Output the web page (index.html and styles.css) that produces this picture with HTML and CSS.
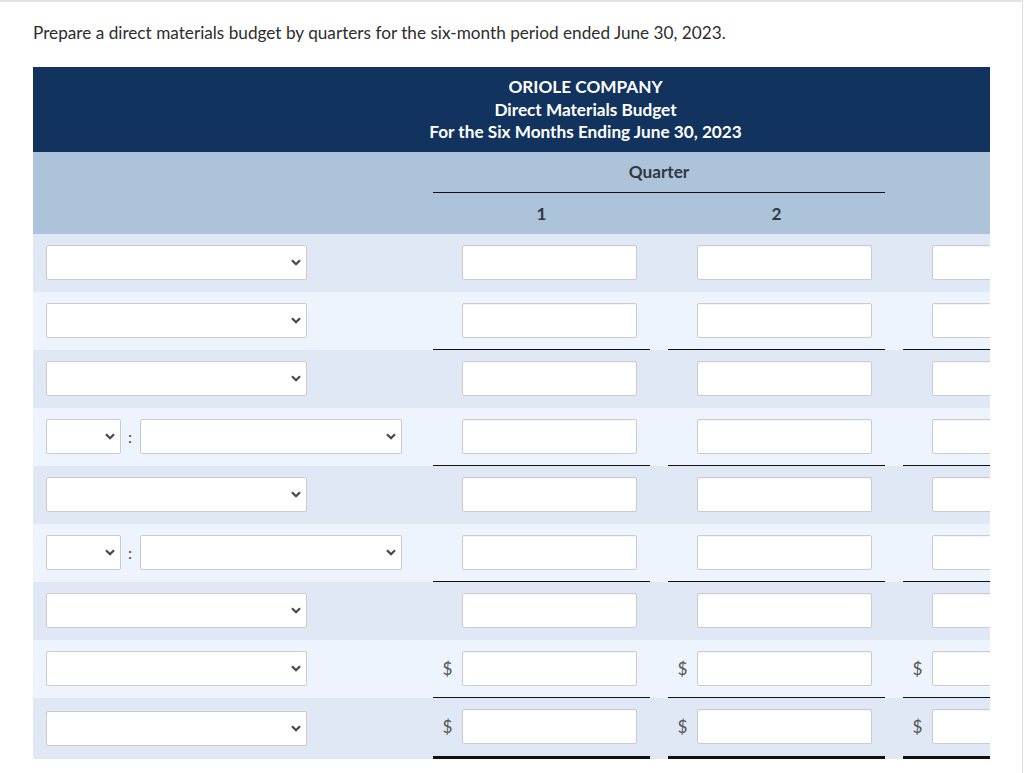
FILE: index.html
```html
<!DOCTYPE html>
<html>
<head>
	<title>Direct Materials Budget</title>
	<link rel="stylesheet" href="styles.css">
</head>
<body>
	<div class="page">
		<p class="prompt">Prepare a direct materials budget by quarters for the six-month period ended June 30, 2023.</p>

		<div class="scroller">
			<table class="budget">
				<colgroup>
					<col class="c-label">
					<col class="c-q">
					<col class="c-q">
					<col class="c-tot">
				</colgroup>
				<thead>
					<tr>
						<th class="title" colspan="4">ORIOLE COMPANY<br>Direct Materials Budget<br>For the Six Months Ending June 30, 2023</th>
					</tr>
					<tr class="sub">
						<th></th>
						<th colspan="2"><div class="ruled-head">Quarter</div></th>
						<th></th>
					</tr>
					<tr class="sub">
						<th></th>
						<th><div class="num-head">1</div></th>
						<th><div class="num-head">2</div></th>
						<th></th>
					</tr>
				</thead>
				<tbody>
					<tr class="dark">
						<td class="label"><span class="pick"><select></select><svg viewBox="0 0 10 7"><path d="M1 1.2L5 5.2L9 1.2"/></svg></span></td>
						<td class="amt"><div class="box"><span class="cur"></span><input type="text"></div></td>
						<td class="amt"><div class="box"><span class="cur"></span><input type="text"></div></td>
						<td class="amt"><div class="box"><span class="cur"></span><input type="text"></div></td>
					</tr>
					<tr class="light ruled">
						<td class="label"><span class="pick"><select></select><svg viewBox="0 0 10 7"><path d="M1 1.2L5 5.2L9 1.2"/></svg></span></td>
						<td class="amt"><div class="box"><span class="cur"></span><input type="text"></div></td>
						<td class="amt"><div class="box"><span class="cur"></span><input type="text"></div></td>
						<td class="amt"><div class="box"><span class="cur"></span><input type="text"></div></td>
					</tr>
					<tr class="dark">
						<td class="label"><span class="pick"><select></select><svg viewBox="0 0 10 7"><path d="M1 1.2L5 5.2L9 1.2"/></svg></span></td>
						<td class="amt"><div class="box"><span class="cur"></span><input type="text"></div></td>
						<td class="amt"><div class="box"><span class="cur"></span><input type="text"></div></td>
						<td class="amt"><div class="box"><span class="cur"></span><input type="text"></div></td>
					</tr>
					<tr class="light ruled">
						<td class="label"><span class="pick short"><select></select><svg viewBox="0 0 10 7"><path d="M1 1.2L5 5.2L9 1.2"/></svg></span><span class="colon">:</span><span class="pick wide"><select></select><svg viewBox="0 0 10 7"><path d="M1 1.2L5 5.2L9 1.2"/></svg></span></td>
						<td class="amt"><div class="box"><span class="cur"></span><input type="text"></div></td>
						<td class="amt"><div class="box"><span class="cur"></span><input type="text"></div></td>
						<td class="amt"><div class="box"><span class="cur"></span><input type="text"></div></td>
					</tr>
					<tr class="dark">
						<td class="label"><span class="pick"><select></select><svg viewBox="0 0 10 7"><path d="M1 1.2L5 5.2L9 1.2"/></svg></span></td>
						<td class="amt"><div class="box"><span class="cur"></span><input type="text"></div></td>
						<td class="amt"><div class="box"><span class="cur"></span><input type="text"></div></td>
						<td class="amt"><div class="box"><span class="cur"></span><input type="text"></div></td>
					</tr>
					<tr class="light ruled">
						<td class="label"><span class="pick short"><select></select><svg viewBox="0 0 10 7"><path d="M1 1.2L5 5.2L9 1.2"/></svg></span><span class="colon">:</span><span class="pick wide"><select></select><svg viewBox="0 0 10 7"><path d="M1 1.2L5 5.2L9 1.2"/></svg></span></td>
						<td class="amt"><div class="box"><span class="cur"></span><input type="text"></div></td>
						<td class="amt"><div class="box"><span class="cur"></span><input type="text"></div></td>
						<td class="amt"><div class="box"><span class="cur"></span><input type="text"></div></td>
					</tr>
					<tr class="dark">
						<td class="label"><span class="pick"><select></select><svg viewBox="0 0 10 7"><path d="M1 1.2L5 5.2L9 1.2"/></svg></span></td>
						<td class="amt"><div class="box"><span class="cur"></span><input type="text"></div></td>
						<td class="amt"><div class="box"><span class="cur"></span><input type="text"></div></td>
						<td class="amt"><div class="box"><span class="cur"></span><input type="text"></div></td>
					</tr>
					<tr class="light ruled">
						<td class="label"><span class="pick"><select></select><svg viewBox="0 0 10 7"><path d="M1 1.2L5 5.2L9 1.2"/></svg></span></td>
						<td class="amt"><div class="box"><span class="cur">$</span><input type="text"></div></td>
						<td class="amt"><div class="box"><span class="cur">$</span><input type="text"></div></td>
						<td class="amt"><div class="box"><span class="cur">$</span><input type="text"></div></td>
					</tr>
					<tr class="dark total">
						<td class="label"><span class="pick"><select></select><svg viewBox="0 0 10 7"><path d="M1 1.2L5 5.2L9 1.2"/></svg></span></td>
						<td class="amt"><div class="box"><span class="cur">$</span><input type="text"></div></td>
						<td class="amt"><div class="box"><span class="cur">$</span><input type="text"></div></td>
						<td class="amt"><div class="box"><span class="cur">$</span><input type="text"></div></td>
					</tr>
				</tbody>
			</table>
		</div>
	</div>
</body>
</html>
```

FILE: styles.css
```css
*{box-sizing: border-box;}
body{
	margin: 0;
	font-family: Lato, "Liberation Sans", sans-serif;
	color: #2d2d2d;
}
.page{
	width: 1023px;
	min-height: 100vh;
	border-top: 2px solid #e3e3e3;
	border-right: 1px solid #dcdcdc;
	padding: 20px 0 0 33px;
}
.prompt{
	margin: 0;
	font-size: 17.2px;
	line-height: 22px;
}
.scroller{
	width: 957px;
	margin-top: 23px;
	overflow: hidden;
}
.budget{
	width: 1105px;
	border-collapse: collapse;
	table-layout: fixed;
}
.c-label{ width: 391px; }
.c-q{ width: 235px; }
.c-tot{ width: 244px; }
.budget th, .budget td{ padding: 0; }
.title{
	background-color: #12335e;
	color: #fff;
	font-size: 17.2px;
	font-weight: bold;
	line-height: 22.5px;
	padding: 9px 0 8px !important;
	text-align: center;
}
.sub th{
	background-color: #adc3da;
	color: #2f3942;
	font-size: 17.2px;
	font-weight: bold;
	padding: 0 9px !important;
	text-align: center;
}
.ruled-head{
	line-height: 22px;
	padding: 9px 0;
	border-bottom: 1px solid #111;
}
.num-head{
	line-height: 22px;
	padding: 10px 0 9px;
}
.dark td{ background-color: #dfe8f4; }
.light td{ background-color: #edf4fd; }
.label{
	padding-left: 13px !important;
	vertical-align: middle;
	white-space: nowrap;
}
.pick{
	display: inline-flex;
	align-items: center;
	width: 261px;
	height: 35px;
	vertical-align: middle;
	background-color: #fff;
	border: 1px solid #cbcbcb;
	border-radius: 2px;
}
.pick.short{ width: 75px; }
.pick.wide{ width: 262px; }
.pick select{
	flex: 1;
	min-width: 0;
	height: 100%;
	border: 0;
	background: transparent;
	-webkit-appearance: none;
	appearance: none;
}
.pick svg{
	width: 10px;
	height: 7px;
	margin-right: 5px;
	fill: none;
	stroke: #4a4a4a;
	stroke-width: 2.3;
}
.colon{
	display: inline-block;
	width: 19px;
	padding-left: 7px;
	vertical-align: middle;
	font-size: 16px;
	color: #444;
}
.amt{
	padding: 0 9px !important;
}
.box{
	display: flex;
	align-items: center;
	padding: 11px 0 11px 0;
	border-bottom: 1px solid transparent;
}
.ruled .box{ border-bottom-color: #111; }
.total .box{
	padding-bottom: 12px;
	border-bottom: 3px solid #111;
}
.cur{
	width: 29px;
	text-align: center;
	font-size: 17.2px;
	color: #555;
}
.box input{
	width: 175px;
	height: 35px;
	border: 1px solid #cbcbcb;
	border-radius: 2px;
	background-color: #fff;
	box-shadow: inset 0 1px 1px rgba(0,0,0,.04);
}
```
